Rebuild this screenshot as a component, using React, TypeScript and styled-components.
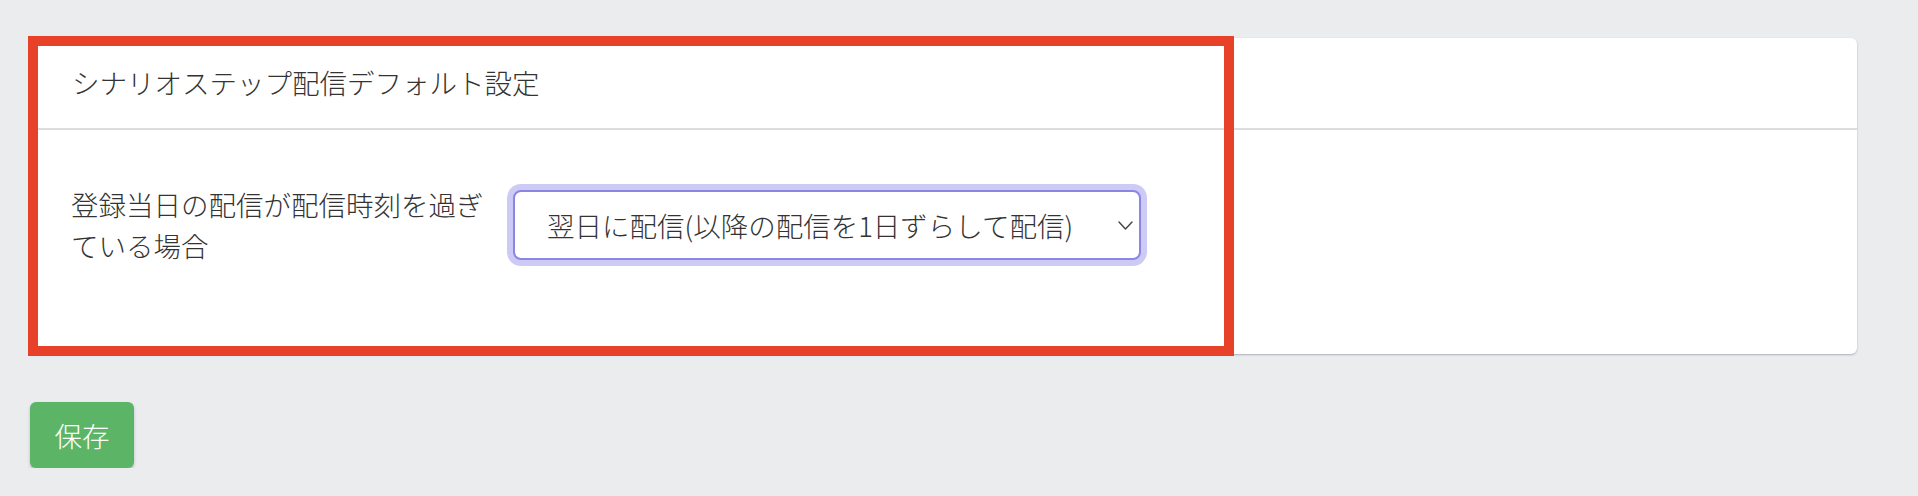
import React from 'react'
import styled, { createGlobalStyle } from 'styled-components'

const GlobalStyle = createGlobalStyle`
  html, body {
    margin: 0;
    padding: 0;
    background: #ebecee;
    font-family: "Noto Sans CJK JP", "Noto Sans", sans-serif;
    font-weight: 300;
    color: #3b3b3b;
  }
`

const Page = styled.div`
  padding: 38px 0 0 30px;
  display: flex;
  flex-direction: column;
  align-items: flex-start;
  gap: 48px;
`

const CardWrap = styled.div`
  position: relative;
`

const Card = styled.section`
  width: 1827px;
  background: #ffffff;
  border-radius: 6px;
  box-shadow: 0 1px 2px rgba(80, 90, 110, 0.4);
`

const CardHeader = styled.header`
  height: 90px;
  display: flex;
  align-items: center;
  padding: 0 42px;
  border-bottom: 2px solid #dcdce1;
`

const Title = styled.h2`
  margin: 0;
  font-size: 27.5px;
  font-weight: 300;
  line-height: 1;
  color: #333333;
`

const CardBody = styled.div`
  padding: 54px 41px 88px;
`

const FormRow = styled.div`
  display: grid;
  grid-template-columns: 430px 628px;
  column-gap: 12px;
  align-items: center;
`

const Label = styled.label`
  font-size: 27.5px;
  line-height: 41px;
  color: #333333;
`

const SelectBox = styled.div`
  position: relative;
  height: 70px;
`

const Select = styled.select`
  appearance: none;
  width: 100%;
  height: 100%;
  box-sizing: border-box;
  padding: 0 40px 0 32px;
  border: 2px solid #8b85e4;
  border-radius: 8px;
  box-shadow: 0 0 0 6px #cdcaf6;
  background: #ffffff;
  font-family: inherit;
  font-weight: 300;
  font-size: 27.5px;
  color: #333333;
  outline: none;
`

const Chevron = styled.svg`
  position: absolute;
  right: 8px;
  top: 31px;
  width: 15px;
  height: 9px;
  pointer-events: none;
`

const Highlight = styled.div`
  position: absolute;
  top: -2px;
  left: -2px;
  width: 1206px;
  height: 320px;
  box-sizing: border-box;
  border: 10px solid #e8412a;
  pointer-events: none;
`

const SaveButton = styled.button`
  width: 104px;
  height: 66px;
  border: none;
  border-radius: 6px;
  background: #5cb567;
  color: #ffffff;
  font-family: inherit;
  font-weight: 300;
  font-size: 27.5px;
  box-shadow: 0 2px 3px rgba(60, 70, 90, 0.3);
  cursor: pointer;
`

export default function App () {
  return (
    <>
      <GlobalStyle />
      <Page>
        <CardWrap>
          <Card>
            <CardHeader>
              <Title>シナリオステップ配信デフォルト設定</Title>
            </CardHeader>
            <CardBody>
              <FormRow>
                <Label htmlFor='overdue'>登録当日の配信が配信時刻を過ぎている場合</Label>
                <SelectBox>
                  <Select id='overdue' defaultValue='next'>
                    <option value='next'>翌日に配信(以降の配信を1日ずらして配信)</option>
                  </Select>
                  <Chevron viewBox='0 0 15 9' fill='none' stroke='#444' strokeWidth='1.4' strokeLinecap='round' strokeLinejoin='round'>
                    <polyline points='1,1 7.5,8 14,1' />
                  </Chevron>
                </SelectBox>
              </FormRow>
            </CardBody>
          </Card>
          <Highlight />
        </CardWrap>
        <SaveButton type='button'>保存</SaveButton>
      </Page>
    </>
  )
}
